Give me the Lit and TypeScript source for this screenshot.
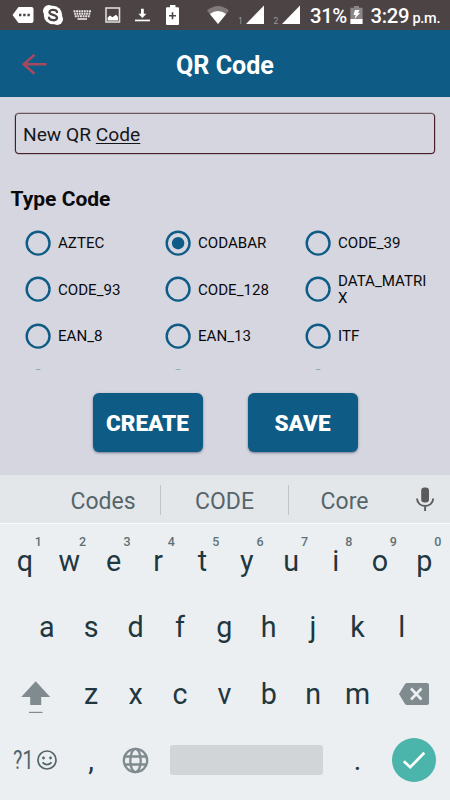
import { LitElement, html, css, svg } from "lit";
import { customElement, property, state } from "lit/decorators.js";

@customElement("status-bar")
class StatusBar extends LitElement {
  static styles = css`
    :host {
      display: flex;
      align-items: flex-start;
      height: 30px;
      box-sizing: border-box;
      padding-left: 12px;
      background: #4b4344;
      color: #fff;
      font-family: Roboto, sans-serif;
      white-space: nowrap;
      overflow: hidden;
    }
    svg { display: block; flex: none; height: 30px; }
    .more { width: 22px; margin-right: 9px; }
    .skype { width: 20px; margin-right: 10px; }
    .keys { width: 18px; margin-right: 14px; }
    .image { width: 16px; margin-right: 14px; }
    .download { width: 15px; margin-right: 16px; }
    .plus { width: 14px; margin-right: 27px; }
    .wifi { width: 22px; margin-right: 9px; }
    .sim { width: 8px; font-size: 8.5px; line-height: 42px; color: #a09a9b; }
    .signal { width: 18px; }
    .gap { margin-right: 9.5px; }
    .percent { width: 40px; margin-left: 10.5px; font-size: 20.3px; font-weight: 500; line-height: 32px; letter-spacing: -0.4px; }
    .charge { width: 13px; }
    .time { width: 42px; margin-left: 7.5px; font-size: 20.3px; font-weight: 500; line-height: 32px; letter-spacing: -0.3px; }
    .meridiem { font-size: 14.5px; font-weight: 500; line-height: 37px; letter-spacing: -0.3px; }
  `;
  render() {
    const signal = svg`<path d="M18 5.5V24H0Z" fill="#fff"/>`;
    return html`
      <svg class="more" viewBox="0 0 22 30">
        <path d="M6.5 7H19.5Q21.5 7 21.5 9V21Q21.5 23 19.5 23H6.5L0.5 15Z" fill="#fff"/>
        <path d="M7 13.8h2.4v2.4H7zM11.2 13.8h2.4v2.4h-2.4zM15.4 13.8h2.4v2.4h-2.4z" fill="#4b4344"/>
      </svg>
      <svg class="skype" viewBox="0 0 20 30">
        <circle cx="6" cy="11" r="6" fill="#fff"/><circle cx="14.2" cy="19.2" r="5.8" fill="#fff"/>
        <circle cx="10" cy="15" r="9.2" fill="#fff"/>
        <path d="M14 12C13.4 9.2 6.5 8.9 6.5 12.2C6.5 15.7 14 14 14 17.8C14 21.2 6.4 20.9 6 17.7" fill="none" stroke="#4b4344" stroke-width="2.3" stroke-linecap="round"/>
      </svg>
      <svg class="keys" viewBox="0 0 18 30" stroke="#ebe8e8" fill="none">
        <path d="M.5 11.2H18" stroke-width="2.1" stroke-dasharray="1.9 .7"/>
        <path d="M1.2 13.8H17.5" stroke-width="2" stroke-dasharray="1.7 .7"/>
        <path d="M1.8 16.3H17" stroke-width="1.9" stroke-dasharray="1.9 .7"/>
        <path d="M4.5 19H14" stroke-width="1.6"/>
      </svg>
      <svg class="image" viewBox="0 0 16 30">
        <rect x="1" y="8" width="13.5" height="14" fill="none" stroke="#dedada" stroke-width="1.6"/>
        <path d="M2.6 20.5V17.5L5 15.5L7.4 17.3L11 14.7L13 17V20.5Z" fill="#fff"/>
      </svg>
      <svg class="download" viewBox="0 0 15 30">
        <path d="M6 8.8h2.8v5h2.6L7.4 18L3.4 13.8H6Z" fill="#fff"/><path d="M0 19.6h15v1.7H0z" fill="#fff"/>
      </svg>
      <svg class="plus" viewBox="0 0 14 30">
        <path d="M4 5h5.5v2.2H12Q13 7.2 13 8.2V24Q13 25 12 25H1Q0 25 0 24V8.2Q0 7.2 1 7.2H4Z" fill="#fff"/>
        <path d="M6.5 12.2V19.2M3 15.7H10" stroke="#4b4344" stroke-width="1.6"/>
      </svg>
      <svg class="wifi" viewBox="0 0 22 30">
        <path d="M0 10.5Q11 1.5 22 10.5L11 24Z" fill="#807a7b"/><path d="M2.8 14Q11 8 19.2 14L11 24Z" fill="#fff"/>
      </svg>
      <span class="sim">1</span><svg class="signal gap" viewBox="0 0 18 30">${signal}</svg>
      <span class="sim">2</span><svg class="signal" viewBox="0 0 18 30">${signal}</svg>
      <span class="percent">31%</span>
      <svg class="charge" viewBox="0 0 13 30">
        <path d="M4 6h5v1.8h3.6V20H.4V7.8H4Z" fill="#8b8687"/><path d="M.4 19h12.2v5H.4z" fill="#fff"/>
        <path d="M5 10H9.5L8 13H10L4.5 19L5.8 15H3.5Z" fill="#fff"/>
      </svg>
      <span class="time">3:29</span><span class="meridiem">p.m.</span>
    `;
  }
}

@customElement("radio-option")
class RadioOption extends LitElement {
  @property() label = "";
  @property({ type: Boolean }) checked = false;
  static styles = css`
    :host {
      display: flex;
      align-items: center;
      box-sizing: border-box;
      height: 46.25px;
      font: 15.1px/17.5px Roboto, sans-serif;
      color: #0a0a0c;
    }
    .ring { flex: none; display: block; margin-right: 7px; }
    .label { width: 90px; padding-top: 2px; word-break: break-all; }
  `;
  render() {
    return html`
      <svg class="ring" width="26" height="26" viewBox="0 0 26 26">
        <circle cx="13.1" cy="13.2" r="11.4" fill="none" stroke="#0e5b85" stroke-width="2.4"/>
        ${this.checked ? svg`<circle cx="13.1" cy="13.2" r="6.2" fill="#0e5b85"/>` : ""}
      </svg>
      <span class="label">${this.label}</span>`;
  }
}

@customElement("soft-keyboard")
class SoftKeyboard extends LitElement {
  static styles = css`
    :host {
      display: flex;
      flex-direction: column;
      flex: 1;
      background: #eceff2;
      color: #1f373f;
      font-family: Roboto, sans-serif;
    }
    svg { display: block; flex: none; }
    .suggestions {
      display: flex;
      align-items: center;
      height: 49px;
      box-sizing: border-box;
      padding-left: 46px;
      background: #e4e7ea;
      border-bottom: 1px solid #f8fafa;
      color: #56656a;
      font-size: 23px;
      line-height: 27px;
    }
    .word { width: 114px; text-align: center; padding-top: 5px; }
    .word.mid { width: 127px; }
    .word.last { width: 111px; }
    .rule { width: 1px; height: 30px; margin-top: 2px; background: #bfc4c7; }
    .mic { margin-left: 15px; }
    .rows { display: flex; flex-direction: column; padding-top: 2.8px; }
    .row { display: flex; align-items: center; height: 66.7px; padding-left: 2.7px; }
    .row.second { padding-left: 24.5px; }
    .key {
      position: relative;
      width: 44.4px;
      height: 66.7px;
      text-align: center;
      font-size: 28.7px;
      line-height: 69.7px;
    }
    .hint {
      position: absolute;
      left: 29.5px;
      top: 7.4px;
      width: 12px;
      font-size: 12.5px;
      font-weight: 500;
      line-height: 16px;
      text-align: center;
      color: #607176;
    }
    .shift { margin-left: 18.3px; margin-right: 18px; }
    .erase { margin-left: 19px; }
    .symbols {
      width: 23px;
      margin-left: 10.6px;
      font-size: 25.5px;
      line-height: 60px;
      color: #52656b;
      white-space: nowrap;
      transform: scaleX(0.78);
      transform-origin: left;
    }
    .comma { margin-left: 10.5px; line-height: 67px; }
    .globe { margin-left: 8.7px; }
    .space { width: 153px; height: 30px; margin-left: 21px; border-radius: 3px; background: #d1d5d8; }
    .period { margin-left: 12.5px; line-height: 67px; }
    .enter { margin-left: 12.2px; }
  `;
  render() {
    const top = [..."qwertyuiop"], middle = [..."asdfghjkl"], low = [..."zxcvbnm"];
    return html`
      <div class="suggestions">
        <span class="word">Codes</span><span class="rule"></span>
        <span class="word mid">CODE</span><span class="rule"></span>
        <span class="word last">Core</span>
        <svg class="mic" width="20" height="26" viewBox="0 0 20 26">
          <rect x="6.2" y="1.5" width="7.8" height="15" rx="3.2" fill="#5b5b5c"/>
          <path d="M2 12.5C2.3 22.5 17.9 22.5 18.2 12.5M10.1 20V25" fill="none" stroke="#5b5b5c" stroke-width="1.9"/>
        </svg>
      </div>
      <div class="rows">
        <div class="row">
          ${top.map((k, i) => html`<span class="key">${k}<span class="hint">${(i + 1) % 10}</span></span>`)}
        </div>
        <div class="row second">${middle.map((k) => html`<span class="key">${k}</span>`)}</div>
        <div class="row">
          <svg class="shift" width="30" height="38" viewBox="0 0 30 38">
            <path d="M14.7 6.3L29.2 22H20.2V30H9.2V22H.2Z" fill="#7f8b8f"/><path d="M8 36.8H21.5V38H8Z" fill="#7f8b8f"/>
          </svg>
          ${low.map((k) => html`<span class="key">${k}</span>`)}
          <svg class="erase" width="31" height="24" viewBox="0 0 31 24">
            <path d="M8 1H28Q30 1 30 3V21Q30 23 28 23H8Q6.8 23 6 22L0 12L6 2Q6.8 1 8 1Z" fill="#7f8b8f"/>
            <path d="M12 6.5L22.5 17.5M22.5 6.5L12 17.5" stroke="#eceff2" stroke-width="2.6"/>
          </svg>
        </div>
        <div class="row">
          <span class="symbols">?1</span>
          <svg width="22" height="22" viewBox="0 0 22 22">
            <circle cx="11" cy="11" r="9" fill="none" stroke="#52656b" stroke-width="1.7"/>
            <circle cx="7.5" cy="9" r="1.4" fill="#52656b"/><circle cx="14.5" cy="9" r="1.4" fill="#52656b"/>
            <path d="M6.5 13.3Q11 18 15.5 13.3" fill="none" stroke="#52656b" stroke-width="1.7"/>
          </svg>
          <span class="key comma">,</span>
          <svg class="globe" width="27" height="27" viewBox="0 0 27 27" fill="none" stroke="#7f8b8f" stroke-width="2.3">
            <circle cx="13.5" cy="13.5" r="11.7"/><ellipse cx="13.5" cy="13.5" rx="5.2" ry="11.7"/>
            <path d="M2.8 9.5H24.2M2.8 17.5H24.2"/>
          </svg>
          <span class="space"></span>
          <span class="key period">.</span>
          <svg class="enter" width="44" height="44" viewBox="0 0 44 44">
            <circle cx="22" cy="22" r="22" fill="#4cb5ab"/>
            <path d="M11.8 23.3L18.2 29.2L32.3 14.8" fill="none" stroke="#fff" stroke-width="2.7"/>
          </svg>
        </div>
      </div>
    `;
  }
}

@customElement("app-root")
class AppRoot extends LitElement {
  @state() private selected = "CODABAR";
  private types = [
    "AZTEC", "CODABAR", "CODE_39", "CODE_93", "CODE_128", "DATA_MATRIX",
    "EAN_8", "EAN_13", "ITF", "", "", "",
  ];
  static styles = css`
    :host {
      display: flex;
      flex-direction: column;
      width: 450px;
      height: 800px;
      overflow: hidden;
      background: #d6d6e0;
      font-family: Roboto, sans-serif;
      color: #0a0a0c;
    }
    .header {
      display: grid;
      grid-template-columns: 1fr auto 1fr;
      align-items: center;
      height: 67px;
      padding: 0 21px;
      background: #0e5b85;
    }
    .title { font-size: 25.1px; font-weight: 700; line-height: 30px; padding-top: 5px; color: #fff; }
    .content { height: 378px; display: flex; flex-direction: column; }
    .field {
      height: 41px;
      box-sizing: border-box;
      margin: 16px 15px 0;
      padding-left: 7px;
      border: 1px solid #481f26;
      border-top-color: #6b5560;
      box-shadow: 0 0 0 0.5px rgba(72, 31, 38, 0.35);
      border-radius: 4px;
      font-size: 19.2px;
      line-height: 41px;
      color: #16161a;
    }
    .composing { text-decoration: underline; text-decoration-thickness: 1px; text-underline-offset: 2px; }
    .heading { margin: 33px 0 0 10.5px; font-size: 21px; font-weight: 700; line-height: 24px; }
    .options {
      display: grid;
      grid-template-columns: repeat(3, 140px);
      grid-auto-rows: 46.25px;
      align-content: start;
      height: 150px;
      margin: 9px 0 0 25px;
      overflow: hidden;
    }
    .actions { display: flex; gap: 45px; margin: 22.5px 0 0 92.5px; }
    .button {
      width: 110px;
      height: 59.5px;
      border-radius: 6px;
      background: #0e5b85;
      box-shadow: 0 1px 2.5px rgba(30, 40, 70, 0.55);
      color: #fff;
      font-size: 22.5px;
      font-weight: 900;
      line-height: 61px;
      text-align: center;
    }
  `;
  render() {
    return html`
      <status-bar></status-bar>
      <div class="header">
        <svg width="27" height="24" viewBox="0 0 27 24" fill="none" stroke="#a9475f" stroke-width="2.5">
          <path d="M25.5 12.3H3M13.5 2.8L2.7 12.3L13.5 21.8"/>
        </svg>
        <span class="title">QR Code</span>
      </div>
      <div class="content">
        <div class="field">New QR <span class="composing">Code</span></div>
        <div class="heading">Type Code</div>
        <div class="options">
          ${this.types.map((t) => html`<radio-option
            .label=${t}
            .checked=${t === this.selected}
            @click=${() => (this.selected = t)}></radio-option>`)}
        </div>
        <div class="actions">
          <div class="button">CREATE</div>
          <div class="button">SAVE</div>
        </div>
      </div>
      <soft-keyboard></soft-keyboard>
    `;
  }
}
